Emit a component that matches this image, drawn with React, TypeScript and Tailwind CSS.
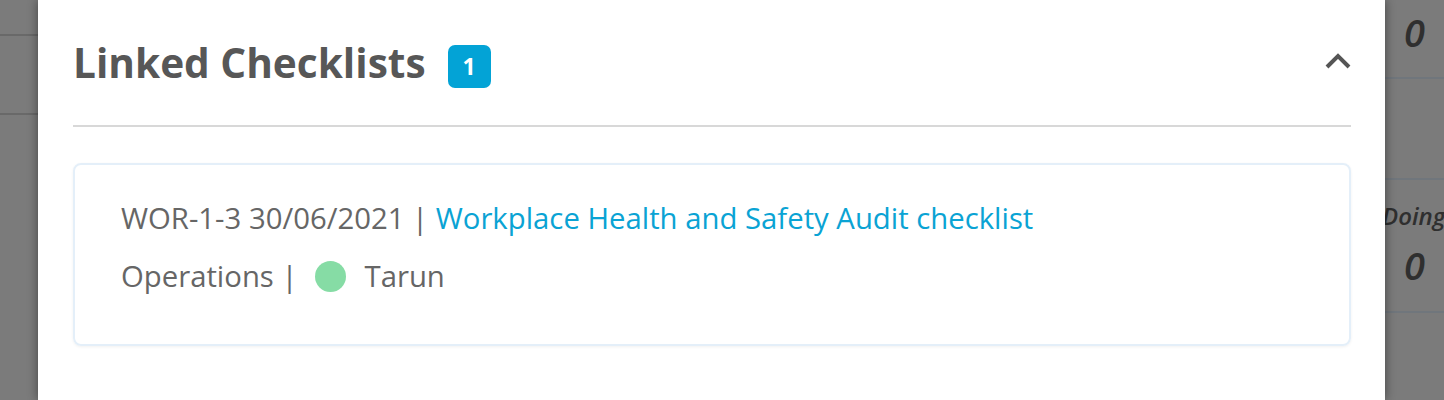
import React from 'react'

function ChevronUp() {
  return (
    <svg width="28" height="18" viewBox="0 0 28 18" fill="none">
      <polyline
        points="3,15 14,4 25,15"
        stroke="#555555"
        strokeWidth="4"
        strokeLinecap="butt"
        strokeLinejoin="miter"
      />
    </svg>
  )
}

export default function App() {
  return (
    <div
      className="h-[400px] w-full overflow-hidden flex bg-[#7b7b7b]"
      style={{ fontFamily: '"Open Sans", "Noto Sans", sans-serif' }}
    >
      {/* LEFT BACKDROP */}
      <div className="w-[38px] shrink-0 flex flex-col">
        <div className="h-[36px] border-b-2 border-[#696969]" />
        <div className="h-[79px] border-b-2 border-[#696969]" />
      </div>

      {/* MODAL */}
      <div className="w-[1347px] shrink-0 bg-white shadow-[0_0_10px_rgba(0,0,0,0.45)] z-10 pl-[35px] pr-[34px] pt-[38px]">
        <div className="flex items-center justify-between h-[50px]">
          <div className="flex items-center">
            <h2 className="text-[40.6px] leading-[50px] font-bold text-[#575757]">
              Linked Checklists
            </h2>
            <span className="ml-[22px] mt-[6px] w-[43px] h-[43px] rounded-[7px] bg-[#03a3d6] text-white text-[23px] font-bold flex items-center justify-center">
              1
            </span>
          </div>
          <div className="mr-[-1px] mt-[-4px]">
            <ChevronUp />
          </div>
        </div>

        <div className="mt-[37px] h-[2px] bg-[#d8d8d8]" />

        <div className="mt-[36px] h-[183px] rounded-[8px] border-2 border-[#e4eff9] shadow-[0_1px_3px_rgba(0,0,0,0.06)] pl-[46px] pt-[33px]">
          <div className="text-[29.3px] leading-[40px] text-[#666666]">
            WOR-1-3 30/06/2021 |{' '}
            <span className="text-[#0aa3d4]">
              Workplace Health and Safety Audit checklist
            </span>
          </div>
          <div className="mt-[18px] flex items-center text-[29.3px] leading-[40px] text-[#666666]">
            <span>Operations |</span>
            <span className="ml-[17px] w-[31px] h-[31px] rounded-full bg-[#86dca5]" />
            <span className="ml-[19px]">Tarun</span>
          </div>
        </div>
      </div>

      {/* RIGHT BACKDROP */}
      <div className="w-[59px] shrink-0 flex flex-col text-[#2f2f2f] italic">
        <div className="h-[79px] border-b-2 border-[#70767c] pl-[19px] pt-[10px] text-[38px] leading-[44px] font-semibold">
          0
        </div>
        <div className="h-[101px] border-b-2 border-[#70767c]" />
        <div className="h-[133px] border-b-2 border-[#70767c] pt-[20px]">
          <div className="text-[24px] leading-[32px] font-semibold -ml-[3px] whitespace-nowrap">
            Doing
          </div>
          <div className="mt-[11px] pl-[19px] text-[38px] leading-[44px] font-semibold">0</div>
        </div>
      </div>
    </div>
  )
}
